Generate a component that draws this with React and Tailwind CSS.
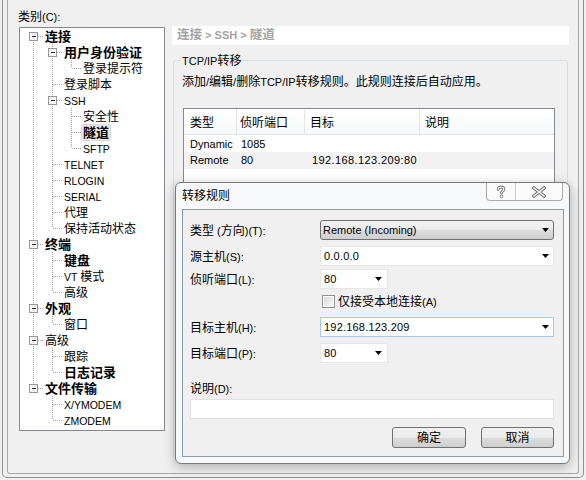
import React from 'react'

const CJK = /([\u2E80-\u9FFF\u3000-\u303F\uFF00-\uFFEF]+)/

/* splits CJK and latin runs so each gets its own size (Tahoma-ish latin vs CJK) */
function Mixed({ text, cjk = 'text-[12px]', lat = 'text-[11px]' }) {
  return text.split(CJK).filter(Boolean).map((part, i) => (
    <span key={i} className={CJK.test(part) ? cjk : lat}>{part}</span>
  ))
}

const TREE = [
  { t: '连接', b: true, c: [
    { t: '用户身份验证', b: true, c: [{ t: '登录提示符' }] },
    { t: '登录脚本' },
    { t: 'SSH', c: [{ t: '安全性' }, { t: '隧道', b: true, sel: true }, { t: 'SFTP' }] },
    { t: 'TELNET' }, { t: 'RLOGIN' }, { t: 'SERIAL' }, { t: '代理' }, { t: '保持活动状态' },
  ] },
  { t: '终端', b: true, c: [{ t: '键盘', b: true }, { t: 'VT 模式' }, { t: '高级' }] },
  { t: '外观', b: true, c: [{ t: '窗口' }] },
  { t: '高级', c: [{ t: '跟踪' }, { t: '日志记录', b: true }] },
  { t: '文件传输', b: true, c: [{ t: 'X/YMODEM' }, { t: 'ZMODEM' }] },
]

function flatten(nodes, anc = [], out = []) {
  nodes.forEach((n, i) => {
    const last = i === nodes.length - 1
    out.push({ ...n, anc, last, first: anc.length === 0 && i === 0 })
    if (n.c) flatten(n.c, [...anc, !last], out)
  })
  return out
}

const DOT = '#a0a0a0'

function Cell({ pipe, node, last, first, box }) {
  return (
    <svg width="19" height="16" className="shrink-0" shapeRendering="crispEdges">
      {pipe && <line x1="9.5" y1="0" x2="9.5" y2="16" stroke={DOT} strokeDasharray="1 1" />}
      {node && (
        <>
          <line x1="9.5" y1={first ? 8 : 0} x2="9.5" y2={last ? 8 : 16} stroke={DOT} strokeDasharray="1 1" />
          <line x1="10" y1="8.5" x2="19" y2="8.5" stroke={DOT} strokeDasharray="1 1" />
          {box && (
            <>
              <rect x="5.5" y="4.5" width="8" height="8" fill="#f7f7f7" stroke="#969696" />
              <line x1="7.5" y1="8.5" x2="12" y2="8.5" stroke="#2c2c2c" />
            </>
          )}
        </>
      )}
    </svg>
  )
}

function TreeRow({ n }) {
  return (
    <div className="flex h-4 items-center">
      {n.anc.map((cont, k) => <Cell key={k} pipe={cont} />)}
      <Cell node last={n.last} first={n.first} box={!!n.c} />
      <span
        className={
          'whitespace-nowrap leading-[14px] ' +
          (n.b ? 'font-bold ' : '') +
          (n.sel ? 'rounded-[2px] border border-[#d9d9d9] bg-[#e9e9e9] px-[1px]' : 'border border-transparent px-[1px]')
        }
      >
        <Mixed text={n.t} cjk={n.b ? 'text-[13px]' : 'text-[12px]'} lat="text-[10.5px]" />
      </span>
    </div>
  )
}

const btnGrad = 'bg-[linear-gradient(to_bottom,#f2f2f2_0%,#ebebeb_50%,#dddddd_50%,#cfcfcf_100%)]'

function Arrow() {
  return <svg width="7" height="4" viewBox="0 0 7 4" className="shrink-0"><polygon points="0,0 7,0 3.5,4" fill="#000" /></svg>
}

function DropList({ text }) {
  return (
    <div className={`flex h-5 w-[234px] items-center justify-between rounded-[3px] border border-[#707070] pl-[2px] pr-[4px] ${btnGrad}`}>
      <span className="text-[11px]">{text}</span>
      <Arrow />
    </div>
  )
}

function Combo({ text, w, focus }) {
  return (
    <div
      className={
        'flex h-5 items-center justify-between bg-white pl-[3px] ' +
        (w === 'sm' ? 'w-[68px] pr-[5px] ' : 'w-[234px] pr-[4px] ') +
        (focus ? 'border border-[#a9cbe8]' : 'border border-[#e6e6e6]')
      }
    >
      <span className="text-[11px] tracking-[0.2px]">{text}</span>
      <Arrow />
    </div>
  )
}

function Row({ label, className = '', children }) {
  return (
    <div className={'flex h-5 items-center ' + className}>
      <div className="w-[130px] whitespace-nowrap"><Mixed text={label} /></div>
      {children}
    </div>
  )
}

function HelpGlyph() {
  return (
    <svg width="12" height="14" viewBox="0 0 12 14">
      <path d="M3.2 4.6C3.2 2.9 4.4 2 6 2s2.8.9 2.8 2.3c0 1.6-2.3 2-2.3 3.9" fill="none" stroke="#707070" strokeWidth="2.8" strokeLinecap="round" />
      <path d="M3.2 4.6C3.2 2.9 4.4 2 6 2s2.8.9 2.8 2.3c0 1.6-2.3 2-2.3 3.9" fill="none" stroke="#fff" strokeWidth="1.1" strokeLinecap="round" />
      <circle cx="6.5" cy="11.3" r="1.4" fill="#fff" stroke="#707070" strokeWidth="0.9" />
    </svg>
  )
}

function CloseGlyph() {
  return (
    <svg width="16" height="12" viewBox="0 0 16 12">
      <path d="M3 2l10 8M13 2L3 10" fill="none" stroke="#707070" strokeWidth="3.4" strokeLinecap="square" />
      <path d="M3 2l10 8M13 2L3 10" fill="none" stroke="#fff" strokeWidth="1.4" strokeLinecap="square" />
    </svg>
  )
}

export default function App() {
  const rows = flatten(TREE)

  return (
    <div className="relative h-[480px] w-[586px] overflow-hidden bg-[#f0f0f0] font-['Liberation_Sans','Noto_Sans_CJK_SC',sans-serif] text-black">
      {/* window frame (top is cut off) */}
      <div className="ml-[2px] h-[478px] w-[582px] rounded-b-[5px] border-x border-b border-[#8f8f8f] pl-[4px]">
        <div className="flex h-[474px] w-[572px] rounded-b-[3px] border-x border-b border-[#a9a9a9]">

          {/* left: category tree */}
          <div className="w-[157px] shrink-0 pl-[10px] pt-[9px]">
            <div className="h-[14px] leading-[14px] whitespace-nowrap"><Mixed text="类别(C):" /></div>
            <div className="ml-[1px] mt-[4px] h-[404px] w-[146px] border border-[#828790] bg-white pl-[4px]">
              {rows.map((n, i) => <TreeRow key={i} n={n} />)}
            </div>
          </div>

          {/* right: tunnel page */}
          <div className="ml-[7px] pt-[26px]">
            <div className="flex h-[19px] w-[397px] items-center bg-white pl-[5px] font-bold text-[#a3a3a3]">
              <Mixed text="连接 > SSH > 隧道" cjk="text-[12.5px]" lat="text-[11px] whitespace-pre" />
            </div>

            <fieldset className="ml-[1px] mt-[8px] h-[405px] w-[395px] rounded-[3px] border border-[#d5dfe5] px-[8px]">
              <legend className="-ml-[1px] px-[1px] leading-[14px]">
                <Mixed text="TCP/IP转移" />
              </legend>
              <div className="mt-[6px] h-[14px] leading-[14px] whitespace-nowrap">
                <Mixed text="添加/编辑/删除TCP/IP转移规则。此规则连接后自动应用。" />
              </div>

              <div className="ml-[1px] mt-[20px] h-[280px] w-[372px] border border-[#828790] bg-white">
                <div className="flex h-[26px] border-b border-[#e5e5e5] bg-linear-to-b from-white to-[#f7f8f9] text-[12px]">
                  <div className="w-[53px] border-r border-[#e5e5e5] pl-[6px] pt-[5px]">类型</div>
                  <div className="w-[68px] border-r border-[#e5e5e5] pl-[3px] pt-[5px]">侦听端口</div>
                  <div className="w-[115px] border-r border-[#e5e5e5] pl-[5px] pt-[5px]">目标</div>
                  <div className="flex-1 pl-[5px] pt-[5px]">说明</div>
                </div>
                <div className="mt-[1px] flex h-4 items-center text-[11px]">
                  <div className="w-[53px] pl-[6px]">Dynamic</div>
                  <div className="w-[68px] pl-[4px]">1085</div>
                </div>
                <div className="flex h-[17px] items-center bg-[#f2f2f2] text-[11px]">
                  <div className="w-[53px] pl-[6px]">Remote</div>
                  <div className="w-[68px] pl-[4px]">80</div>
                  <div className="pl-[7px] tracking-[0.4px]">192.168.123.209:80</div>
                </div>
              </div>
            </fieldset>
          </div>
        </div>
      </div>

      {/* 转移规则 dialog on top of the page */}
      <div className="absolute left-[175px] top-[182px] flex h-[282px] w-[395px] flex-col rounded-[6px] border border-[#787878] bg-[#f6f8fa] shadow-[0_3px_12px_rgba(0,0,0,0.28)]">
        <div className="flex h-[26px] items-start justify-between">
          <div className="flex h-[26px] items-center pl-[6px] text-[12px]">转移规则</div>
          <div className="mr-[6px] flex h-[18px] overflow-hidden rounded-b-[4px] border-x border-b border-[#ababab] bg-[#fbfbfb]">
            <div className="flex w-[29px] items-center justify-center border-r border-[#c8c8c8]"><HelpGlyph /></div>
            <div className="flex w-[46px] items-center justify-center"><CloseGlyph /></div>
          </div>
        </div>

        <div className="mb-[6px] ml-[6px] mr-[5px] flex-1 border border-[#8e9aa8] bg-[#f0f0f0] pl-[7px] pr-[9px] pt-[10px]">
          <Row label="类型 (方向)(T):"><DropList text="Remote (Incoming)" /></Row>
          <Row className="mt-[6px]" label="源主机(S):"><Combo text="0.0.0.0" /></Row>
          <Row className="mt-[3px]" label="侦听端口(L):"><Combo text="80" w="sm" /></Row>
          <div className="mt-[4px] flex h-4 items-center pl-[132px]">
            <div className="flex h-[13px] w-[13px] items-center justify-center border border-[#8e8f8f] bg-white">
              <div className="h-[9px] w-[9px] bg-linear-to-br from-[#d8d8d8] to-[#f8f8f8]" />
            </div>
            <span className="ml-[3px] whitespace-nowrap"><Mixed text="仅接受本地连接(A)" /></span>
          </div>
          <Row className="mt-[8px]" label="目标主机(H):"><Combo text="192.168.123.209" focus /></Row>
          <Row className="mt-[6px]" label="目标端口(P):"><Combo text="80" w="sm" /></Row>
          <div className="mt-[18px] flex h-4 items-center whitespace-nowrap"><Mixed text="说明(D):" /></div>
          <div className="mt-[2px] h-5 w-[364px] border border-[#e2e2e2] bg-white" />
          <div className="mt-[8px] flex justify-end gap-[15px] text-[12px]">
            <button className={`h-[21px] w-[74px] rounded-[3px] border border-[#707070] ${btnGrad}`}>确定</button>
            <button className={`h-[21px] w-[73px] rounded-[3px] border border-[#707070] ${btnGrad}`}>取消</button>
          </div>
        </div>
      </div>
    </div>
  )
}
